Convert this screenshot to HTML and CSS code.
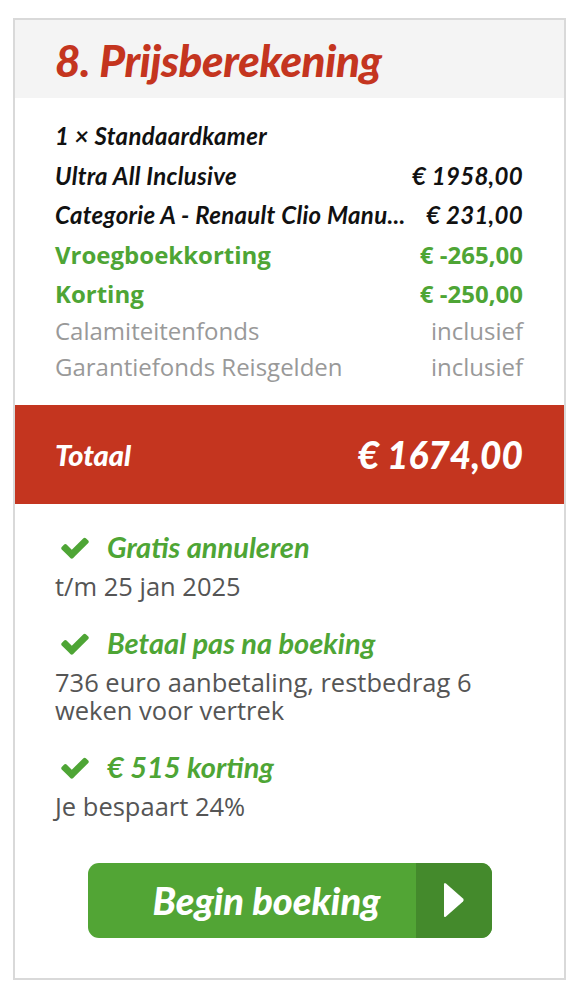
FILE: index.html
```html
<!DOCTYPE html>
<html lang="nl">
<head>
<meta charset="utf-8">
<title>Prijsberekening</title>
<link rel="stylesheet" href="styles.css">
</head>
<body>
<div class="card">
  <div class="card-head">
    <h2 class="title">8. Prijsberekening</h2>
  </div>
  <div class="lines">
    <div class="row row-dark"><span class="label">1 × Standaardkamer</span></div>
    <div class="row row-dark"><span class="label">Ultra All Inclusive</span><span class="value">€ 1958,00</span></div>
    <div class="row row-dark"><span class="label">Categorie A - Renault Clio Manu...</span><span class="value">€ 231,00</span></div>
    <div class="row row-green"><span class="label">Vroegboekkorting</span><span class="value">€ -265,00</span></div>
    <div class="row row-green"><span class="label">Korting</span><span class="value">€ -250,00</span></div>
    <div class="row row-gray"><span class="label">Calamiteitenfonds</span><span class="value">inclusief</span></div>
    <div class="row row-gray"><span class="label">Garantiefonds Reisgelden</span><span class="value">inclusief</span></div>
  </div>
  <div class="total">
    <span class="total-label">Totaal</span>
    <span class="total-value">€ 1674,00</span>
  </div>
  <div class="usps">
    <div class="usp">
      <div class="usp-title"><svg class="check" viewBox="0 0 1792 1408"><path d="M1671 438q0 40-28 68l-724 724-136 136q-28 28-68 28t-68-28l-136-136-362-362q-28-28-28-68t28-68l136-136q28-28 68-28t68 28l294 295 656-657q28-28 68-28t68 28l136 136q28 28 28 68z"/></svg><span>Gratis annuleren</span></div>
      <p class="usp-text">t/m 25 jan 2025</p>
    </div>
    <div class="usp">
      <div class="usp-title"><svg class="check" viewBox="0 0 1792 1408"><path d="M1671 438q0 40-28 68l-724 724-136 136q-28 28-68 28t-68-28l-136-136-362-362q-28-28-28-68t28-68l136-136q28-28 68-28t68 28l294 295 656-657q28-28 68-28t68 28l136 136q28 28 28 68z"/></svg><span>Betaal pas na boeking</span></div>
      <p class="usp-text">736 euro aanbetaling, restbedrag 6 weken voor vertrek</p>
    </div>
    <div class="usp">
      <div class="usp-title"><svg class="check" viewBox="0 0 1792 1408"><path d="M1671 438q0 40-28 68l-724 724-136 136q-28 28-68 28t-68-28l-136-136-362-362q-28-28-28-68t28-68l136-136q28-28 68-28t68 28l294 295 656-657q28-28 68-28t68 28l136 136q28 28 28 68z"/></svg><span>€ 515 korting</span></div>
      <p class="usp-text">Je bespaart 24%</p>
    </div>
  </div>
  <div class="cta-wrap">
    <a class="cta" href="#">
      <span class="cta-text">Begin boeking</span>
      <span class="cta-arrow"><svg viewBox="0 0 22 36"><path d="M3 1.5 L20 16.5 Q21.5 18 20 19.5 L3 34.5 Q1 36 1 33.5 L1 2.5 Q1 0 3 1.5 Z"/></svg></span>
    </a>
  </div>
</div>
</body>
</html>
```

FILE: styles.css
```css
* { box-sizing: border-box; }
html, body { margin: 0; padding: 0; background: #fff; }
body { font-family: "Open Sans", "Liberation Sans", sans-serif; }

.card {
  margin: 18px 0 0 13px;
  width: 553px;
  height: 962px;
  border: 2px solid #d9d9d9;
  background: #fff;
  display: flex;
  flex-direction: column;
}

.card-head {
  height: 78px;
  background: #f4f4f4;
  padding: 0 40px;
  display: flex;
  align-items: center;
}
.title {
  margin: 0;
  font-family: Lato, "Open Sans", sans-serif;
  font-style: italic;
  font-weight: 900;
  font-size: 44px;
  letter-spacing: -0.4px;
  color: #c4351f;
  line-height: 1;
  padding-top: 2px;
}

.lines {
  padding: 18px 41px 20px 40px;
}
.row {
  display: flex;
  justify-content: space-between;
  gap: 18px;
  white-space: nowrap;
}
.row .value { flex: none; }
.row-dark {
  height: 39.5px;
  line-height: 39.5px;
  font-family: Lato, "Open Sans", sans-serif;
  font-style: italic;
  font-weight: 700;
  font-size: 24px;
  letter-spacing: 0.3px;
  color: #111;
}
.row-green {
  height: 39px;
  line-height: 39px;
  font-weight: 700;
  font-size: 24px;
  color: #4ea535;
}
.row-gray {
  height: 36px;
  line-height: 36px;
  font-size: 24px;
  color: #999;
}

.total {
  height: 99px;
  background: #c4351f;
  color: #fff;
  display: flex;
  justify-content: space-between;
  align-items: center;
  padding: 0 41px 0 40px;
  font-family: Lato, "Open Sans", sans-serif;
  font-style: italic;
  font-weight: 900;
}
.total-label { font-size: 29px; }
.total-value { font-size: 37px; }

.usps {
  padding: 26px 40px 0 40px;
}
.usp { margin-bottom: 26px; }
.usp-title {
  display: flex;
  align-items: center;
  gap: 16px;
  font-family: Lato, "Open Sans", sans-serif;
  font-style: italic;
  font-weight: 700;
  font-size: 29px;
  color: #4ea535;
  height: 34px;
  padding-left: 4px;
}
.check { width: 32px; height: 25px; fill: #4ea535; flex: none; }
.usp-text {
  margin: 8px 0 0;
  font-size: 25.5px;
  line-height: 28px;
  color: #555;
}

.cta-wrap {
  display: flex;
  justify-content: center;
  padding-top: 17px;
}
.cta {
  display: flex;
  width: 404px;
  height: 75px;
  border-radius: 11px;
  overflow: hidden;
  text-decoration: none;
  background: #52a535;
}
.cta-text {
  flex: 1;
  display: flex;
  align-items: center;
  justify-content: center;
  padding-left: 30px;
  color: #fff;
  font-family: Lato, "Open Sans", sans-serif;
  font-style: italic;
  font-weight: 900;
  font-size: 38px;
}
.cta-arrow {
  width: 76px;
  background: #448a2c;
  display: flex;
  align-items: center;
  justify-content: center;
}
.cta-arrow svg { width: 22px; height: 36px; fill: #fff; }
```
